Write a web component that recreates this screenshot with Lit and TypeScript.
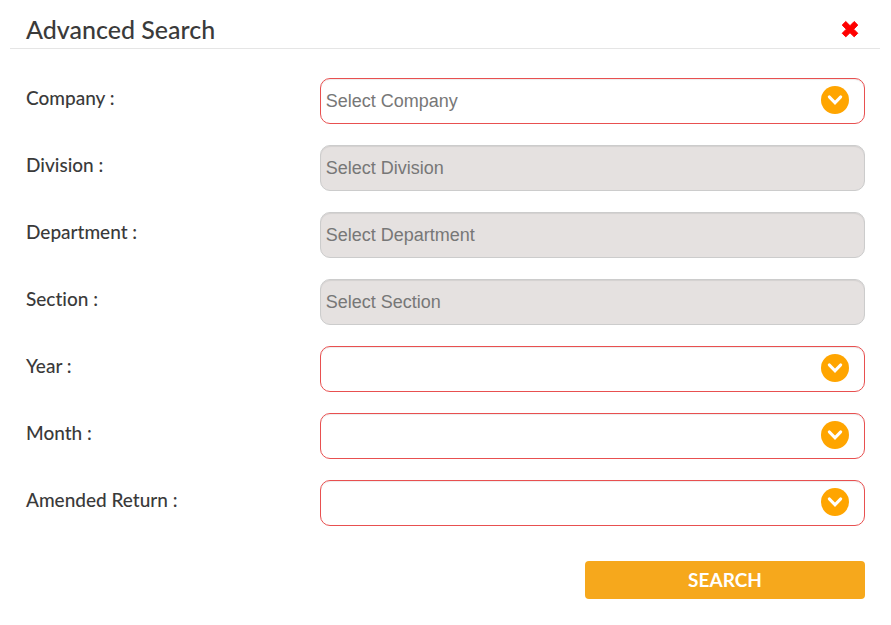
import { LitElement, html, css, svg, nothing } from "lit";
import { customElement, property } from "lit/decorators.js";

interface Field {
  id: string;
  label: string;
  placeholder: string;
  disabled?: boolean;
}

const FIELDS: Field[] = [
  { id: "company", label: "Company :", placeholder: "Select Company" },
  { id: "division", label: "Division :", placeholder: "Select Division", disabled: true },
  { id: "department", label: "Department :", placeholder: "Select Department", disabled: true },
  { id: "section", label: "Section :", placeholder: "Select Section", disabled: true },
  { id: "year", label: "Year :", placeholder: "" },
  { id: "month", label: "Month :", placeholder: "" },
  { id: "amended", label: "Amended Return :", placeholder: "" },
];

@customElement("search-field")
export class SearchField extends LitElement {
  @property({ attribute: false }) field!: Field;

  static styles = css`
    :host {
      display: grid;
      grid-template-columns: 35fr 65fr;
    }
    .label {
      padding-top: 8px;
      font: 500 19px/24px Lato, "Open Sans", sans-serif;
      font-variant-ligatures: none;
      color: #3a3a3a;
    }
    .control {
      position: relative;
      min-width: 0;
    }
    .select {
      appearance: none;
      display: block;
      box-sizing: border-box;
      width: 100%;
      height: 46px;
      margin: 0;
      padding: 0 48px 0 5px;
      border: 1px solid #e85050;
      border-radius: 10px;
      background: #fff;
      box-shadow: inset 0 1px 1px rgba(0, 0, 0, 0.075);
      font: 18px "Liberation Sans", Arial, sans-serif;
      color: #777;
      opacity: 1;
    }
    .select:disabled {
      border-color: #ccc;
      background: #e5e1e0;
      box-shadow: inset 0 1px 1px rgba(0, 0, 0, 0.075);
    }
    .arrow {
      position: absolute;
      top: 8px;
      right: 16px;
      width: 28px;
      height: 28px;
      pointer-events: none;
    }
  `;

  render() {
    const f = this.field;
    return html`
      <label class="label" for=${f.id}>${f.label}</label>
      <div class="control">
        <select class="select" id=${f.id} ?disabled=${f.disabled}>
          <option value="">${f.placeholder}</option>
        </select>
        ${f.disabled
          ? nothing
          : html`<svg class="arrow" viewBox="0 0 28 28" aria-hidden="true">
              ${svg`<circle cx="14" cy="14" r="14" fill="#ffa500"/>
              <path d="M8.400 11l5.600 5.800 5.600-5.800" fill="none" stroke="#fff" stroke-width="3.200" stroke-linecap="round"/>`}
            </svg>`}
      </div>
    `;
  }
}

@customElement("app-root")
export class AppRoot extends LitElement {
  static styles = css`
    :host {
      display: block;
      background: #fff;
      color: #3a3a3a;
      font-family: Lato, "Open Sans", sans-serif;
    }
    .header {
      display: flex;
      align-items: center;
      justify-content: space-between;
      box-sizing: border-box;
      height: 49px;
      margin: 0 11px 0 10px;
      padding: 10px 21px 0 16px;
      border-bottom: 1px solid #e5e5e5;
    }
    .title {
      margin: 0;
      font-size: 25px;
      font-weight: 500;
      line-height: 32px;
    }
    .close {
      display: flex;
      padding: 0;
      border: 0;
      background: none;
      cursor: pointer;
    }
    .cross {
      width: 18px;
      height: 18px;
    }
    .form {
      display: flex;
      flex-direction: column;
      gap: 21px;
      padding: 29px 26px 26px;
    }
    .search {
      align-self: flex-end;
      width: 280px;
      height: 38px;
      margin-top: 14px;
      padding: 0;
      border: 0;
      border-radius: 4px;
      background: #f6a81c;
      color: #fff;
      font: 700 19px/24px Lato, "Open Sans", sans-serif;
      cursor: pointer;
    }
  `;

  render() {
    return html`
      <header class="header">
        <h1 class="title">Advanced Search</h1>
        <button class="close" type="button" aria-label="Close">
          <svg class="cross" viewBox="0 0 18 18" aria-hidden="true">
            <path
              d="M4.800 1.500L9 5.700l4.200-4.200 3.600 3.600L12.700 9.200l4.100 4.100-3.600 3.500L9 12.700l-4.200 4.100-3.600-3.500 4.100-4.100L1.200 5.100z"
              fill="#f00" stroke="#f00" stroke-linejoin="round"
            />
          </svg>
        </button>
      </header>
      <form class="form" @submit=${(e: Event) => e.preventDefault()}>
        ${FIELDS.map((f) => html`<search-field .field=${f}></search-field>`)}
        <button class="search" type="submit">SEARCH</button>
      </form>
    `;
  }
}
